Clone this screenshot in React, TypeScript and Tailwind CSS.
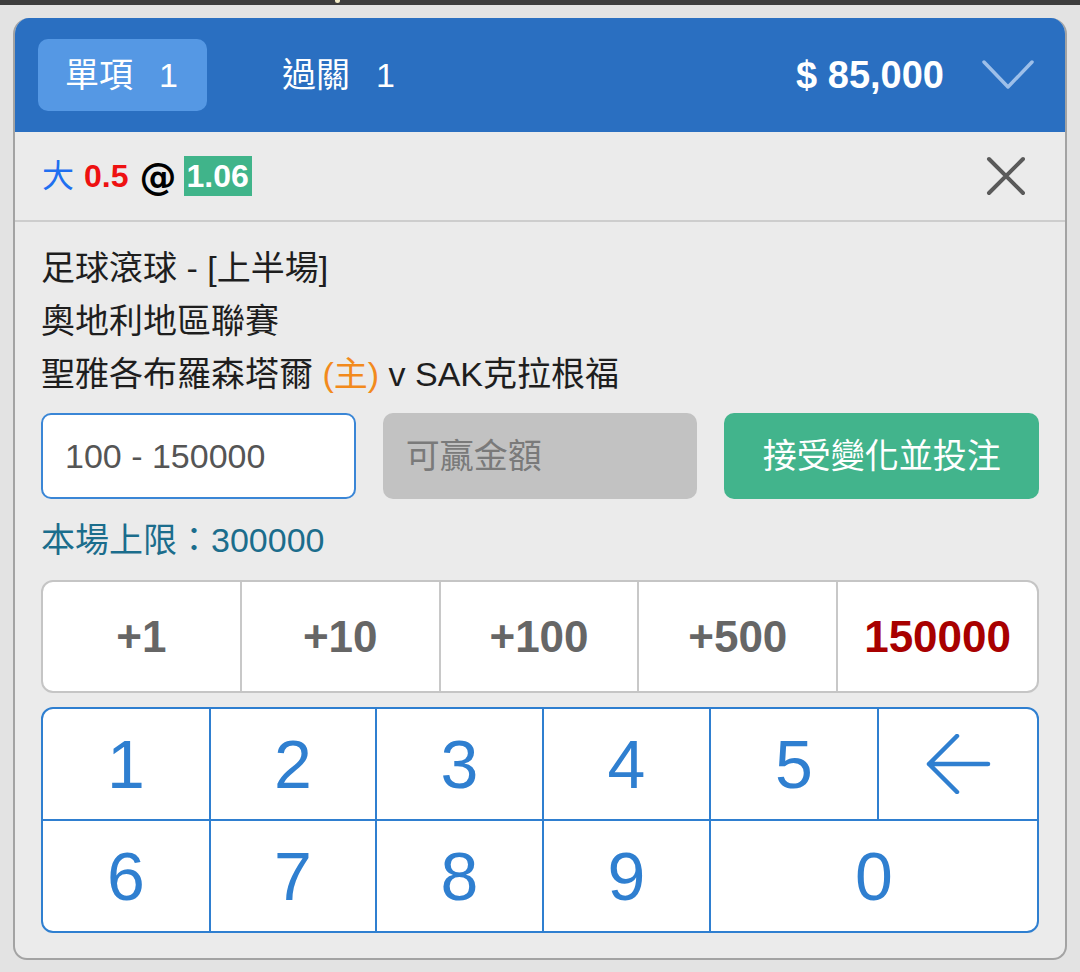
import { useState } from "react";

const quick = ["+1", "+10", "+100", "+500", "150000"];

function Backspace() {
  return (
    <svg width="66" height="60" viewBox="0 0 66 60" fill="none">
      <path
        d="M4 30 H63 M32 2 L4 30 L32 58"
        stroke="#2f7fd0"
        strokeWidth="4.5"
        strokeLinecap="round"
        strokeLinejoin="round"
      />
    </svg>
  );
}

export default function App() {
  const [amount] = useState("");

  const key = "flex items-center justify-center bg-white text-[68px] leading-none text-[#2f7fd0]";

  return (
    <div
      className="relative w-[1080px] h-[972px] overflow-hidden bg-[#e3e3e3]"
      style={{ fontFamily: '"Liberation Sans", "Noto Sans CJK TC", sans-serif' }}
    >
      <div className="relative h-[5px] bg-[#3d3d3d]">
        <span className="absolute left-[335px] top-0 h-[3px] w-[5px] rounded-b-full bg-[#f3ecc8]" />
      </div>

      <div className="px-[13px] pt-[13px]">
        <div className="overflow-hidden rounded-t-[16px] rounded-b-[14px] border-x-2 border-b-2 border-[#a3a3a3] bg-[#ebebeb]">
          {/* header */}
          <div className="-mx-[2px] flex h-[114px] items-center bg-[#2a6fc1] pl-[25px] pr-[33px] text-white">
            <div className="flex h-[72px] w-[169px] items-center gap-[26px] rounded-[10px] bg-[#5598e4] pl-[27px] text-[34px]">
              <span>單項</span>
              <span>1</span>
            </div>
            <div className="ml-[75px] flex items-center gap-[26px] text-[34px]">
              <span>過關</span>
              <span>1</span>
            </div>
            <div className="ml-auto text-[38px] font-bold">$ 85,000</div>
            <svg className="ml-[38px]" width="52" height="30" viewBox="0 0 52 30" fill="none">
              <path d="M2 2 L26 27 L50 2" stroke="#9dbfe9" strokeWidth="3.5" strokeLinecap="round" strokeLinejoin="round" />
            </svg>
          </div>

          {/* selection */}
          <div className="flex h-[90px] items-center border-b-2 border-[#cdcdcd] pl-[27px] pr-[39px]">
            <div className="flex items-center text-[32px] font-bold">
              <span className="font-normal text-[#1f6ff0]">大</span>
              <span className="ml-[10px] text-[#ee1111]">0.5</span>
              <span className="ml-[11px] font-['DejaVu_Sans'] text-[37px] font-bold leading-none text-black">@</span>
              <span className="ml-[7px] h-[40px] bg-[#40b48a] px-[3px] leading-[40px] text-white">1.06</span>
            </div>
            <svg className="ml-auto" width="40" height="40" viewBox="0 0 40 40" fill="none">
              <path d="M3 3 L37 37 M37 3 L3 37" stroke="#5a5a5a" strokeWidth="4" strokeLinecap="round" />
            </svg>
          </div>

          <div className="px-[26px] pb-[25px] pt-[20px]">
            <div className="text-[34px] leading-[53px] text-[#1e1e1e]">
              <div>足球滾球 - [上半場]</div>
              <div>奧地利地區聯賽</div>
              <div>
                聖雅各布羅森塔爾 <span className="text-[#f28a1c]">(主)</span> v SAK克拉根福
              </div>
            </div>

            <div className="mt-[12px] grid h-[86px] grid-cols-3 gap-[27px] text-[34px]">
              <div className="flex items-center rounded-[10px] border-2 border-[#3a86d6] bg-white pl-[22px] text-[#555]">
                {amount || "100 - 150000"}
              </div>
              <div className="flex items-center rounded-[10px] bg-[#c2c2c2] pl-[23px] text-[#7a7a7a]">可贏金額</div>
              <div className="flex items-center justify-center rounded-[10px] bg-[#42b48c] text-white">接受變化並投注</div>
            </div>

            <div className="mt-[21px] h-[40px] text-[34px] leading-[40px] text-[#1b6d8c]">本場上限：300000</div>

            <div className="mt-[20px] grid h-[113px] grid-cols-5 divide-x-2 divide-[#c8c8c8] overflow-hidden rounded-[12px] border-2 border-[#c5c5c5] bg-white">
              {quick.map((q, i) => (
                <div
                  key={q}
                  className={`flex items-center justify-center text-[44px] font-bold ${
                    i === 4 ? "text-[#a80000]" : "text-[#666]"
                  }`}
                >
                  {q}
                </div>
              ))}
            </div>

            <div className="mt-[14px] grid h-[226px] grid-cols-[167fr_165fr_166fr_166fr_167fr_159fr] grid-rows-2 gap-[2px] overflow-hidden rounded-[12px] border-2 border-[#2f7fd0] bg-[#2f7fd0]">
              {["1", "2", "3", "4", "5"].map((n) => (
                <div key={n} className={key}>
                  {n}
                </div>
              ))}
              <div className="flex items-center justify-center bg-white">
                <Backspace />
              </div>
              {["6", "7", "8", "9"].map((n) => (
                <div key={n} className={key}>
                  {n}
                </div>
              ))}
              <div className={`${key} col-span-2`}>0</div>
            </div>
          </div>
        </div>
      </div>
    </div>
  );
}
